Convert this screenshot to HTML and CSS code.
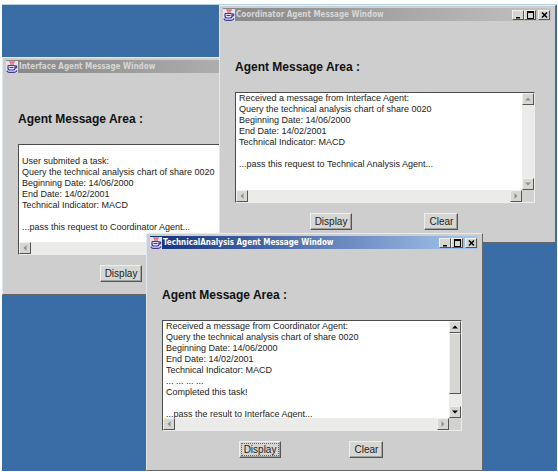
FILE: index.html
```html
<!DOCTYPE html>
<html lang="en">
<head>
<meta charset="utf-8">
<title>Agent Message Windows</title>
<link rel="stylesheet" href="styles.css">
</head>
<body>
<svg width="0" height="0" class="defs" aria-hidden="true">
  <symbol id="java" viewBox="0 0 12 12">
    <rect width="12" height="12" fill="#e4e2ee"/>
    <path d="M4 0v1l1 1v2M6 0v1l1 1v2M8 0v2" fill="none" stroke="#e0606c" stroke-width="1.2"/>
    <path d="M2 4.5h6.5M2 4.5v2.5q0 2 2 2h3q2 0 2-2V4.5M9 5q2-.5 1.800 1T8.500 7.500M3.500 6.500h4M1 9.500q0 1.800 2.500 1.800h4q3 0 3.500-2" fill="none" stroke="#3d3796" stroke-width="1.200"/>
  </symbol>
  <symbol id="min" viewBox="0 0 9 8"><path d="M2 6h4v1.500H2z"/></symbol>
  <symbol id="max" viewBox="0 0 9 8"><path d="M1 0h7v8H1zM2 2v5h5V2z" fill-rule="evenodd"/></symbol>
  <symbol id="close" viewBox="0 0 9 8"><path d="M2 1.500l5 5M7 1.500l-5 5" stroke="#000" stroke-width="1.500"/></symbol>
  <symbol id="up" viewBox="0 0 8 8"><path d="M4 2.500l3 3H1z"/></symbol>
  <symbol id="down" viewBox="0 0 8 8"><path d="M4 5.500l3-3H1z"/></symbol>
  <symbol id="left" viewBox="0 0 8 8"><path d="M2.500 4l3-3v6z"/></symbol>
  <symbol id="right" viewBox="0 0 8 8"><path d="M5.500 4l-3-3v6z"/></symbol>
</svg>
<main class="desktop">
  <section class="window interface">
    <header class="titlebar">
      <svg class="logo"><use href="#java"/></svg>
      <h1 class="title">Interface Agent Message Window</h1>
    </header>
    <div class="content">
      <label class="heading" for="msg1">Agent Message Area :</label>
      <div class="textbox">
        <textarea id="msg1" class="message" readonly>

User submited a task:
Query the technical analysis chart of share 0020
Beginning Date: 14/06/2000
End Date: 14/02/2001
Technical Indicator: MACD

...pass this request to Coordinator Agent...</textarea>
        <div class="vbar"></div>
        <div class="hbar off"><button class="arrow" aria-label="Scroll left"><svg><use href="#left"/></svg></button></div>
      </div>
      <div class="actions"><button class="push">Display</button><button class="push">Clear</button></div>
    </div>
  </section>

  <section class="window coordinator">
    <header class="titlebar">
      <svg class="logo"><use href="#java"/></svg>
      <h1 class="title">Coordinator Agent Message Window</h1>
      <div class="controls">
        <button class="ctl" aria-label="Minimize"><svg><use href="#min"/></svg></button>
        <button class="ctl" aria-label="Maximize"><svg><use href="#max"/></svg></button>
        <button class="ctl close" aria-label="Close"><svg><use href="#close"/></svg></button>
      </div>
    </header>
    <div class="content">
      <label class="heading" for="msg2">Agent Message Area :</label>
      <div class="textbox">
        <textarea id="msg2" class="message" readonly>Received a message from Interface Agent:
Query the technical analysis chart of share 0020
Beginning Date: 14/06/2000
End Date: 14/02/2001
Technical Indicator: MACD

...pass this request to Technical Analysis Agent...</textarea>
        <div class="vbar off">
          <button class="arrow" aria-label="Scroll up"><svg><use href="#up"/></svg></button>
          <button class="arrow" aria-label="Scroll down"><svg><use href="#down"/></svg></button>
        </div>
        <div class="hbar off">
          <button class="arrow" aria-label="Scroll left"><svg><use href="#left"/></svg></button>
          <button class="arrow" aria-label="Scroll right"><svg><use href="#right"/></svg></button>
        </div>
      </div>
      <div class="actions"><button class="push">Display</button><button class="push">Clear</button></div>
    </div>
  </section>

  <section class="window technical active">
    <header class="titlebar">
      <svg class="logo"><use href="#java"/></svg>
      <h1 class="title">TechnicalAnalysis Agent Message Window</h1>
      <div class="controls">
        <button class="ctl" aria-label="Minimize"><svg><use href="#min"/></svg></button>
        <button class="ctl" aria-label="Maximize"><svg><use href="#max"/></svg></button>
        <button class="ctl close" aria-label="Close"><svg><use href="#close"/></svg></button>
      </div>
    </header>
    <div class="content">
      <label class="heading" for="msg3">Agent Message Area :</label>
      <div class="textbox">
        <textarea id="msg3" class="message" readonly>Received a message from Coordinator Agent:
Query the technical analysis chart of share 0020
Beginning Date: 14/06/2000
End Date: 14/02/2001
Technical Indicator: MACD
... ... ... ...
Completed this task!

...pass the result to Interface Agent...</textarea>
        <div class="vbar">
          <button class="arrow" aria-label="Scroll up"><svg><use href="#up"/></svg></button>
          <div class="track"><div class="thumb"></div></div>
          <button class="arrow" aria-label="Scroll down"><svg><use href="#down"/></svg></button>
        </div>
        <div class="hbar off">
          <button class="arrow" aria-label="Scroll left"><svg><use href="#left"/></svg></button>
          <button class="arrow" aria-label="Scroll right"><svg><use href="#right"/></svg></button>
        </div>
      </div>
      <div class="actions"><button class="push focused">Display</button><button class="push">Clear</button></div>
    </div>
  </section>
</main>
</body>
</html>
```
FILE: styles.css
```css
* { box-sizing: border-box; }
body {
  margin: 0;
  padding: 4px 1px 1px 2px;
  min-height: 100vh;
  display: flex;
  background: #fff;
  font-family: "Liberation Sans", Arial, sans-serif;
}
.defs { position: absolute; }
.desktop {
  position: relative;
  flex: 1;
  background: #3a6ca6;
  border-top: 1px solid #b4d4e4;
}
.window {
  position: absolute;
  width: 337px;
  padding: 2px 4px 12px 3px;
  background: #cecece;
  border: 1px solid;
  border-color: #e4ecec #666 #666 #dde8ec;
}
.interface { left: 0; top: 52px; }
.coordinator { left: 217px; top: 0; }
.technical { left: 144px; top: 228px; }

.titlebar {
  display: flex;
  align-items: center;
  height: 13px;
  padding-right: 1px;
  background: linear-gradient(90deg, #868686, #c4c2c2);
  color: #d6d6d6;
}
.active .titlebar {
  background: linear-gradient(90deg, #14307c, #a6c8ee);
  color: #fff;
}
.logo { width: 12px; height: 12px; flex: none; }
.title {
  flex: 1;
  margin: 0;
  padding-left: 1px;
  font: bold 8px/12px "DejaVu Sans Condensed", "DejaVu Sans", sans-serif;
  white-space: nowrap;
}
.controls { display: flex; }
button {
  padding: 0;
  border: 1px solid;
  border-color: #f2f2ee #555 #555 #f2f2ee;
  border-radius: 0;
  background: #d6d6d2;
  color: #222;
}
.ctl { width: 12px; height: 10px; display: flex; align-items: center; justify-content: center; }
.ctl svg { width: 9px; height: 8px; }
.ctl.close { margin-left: 2px; }

.content { padding: 38px 16px 0 12px; }
.heading {
  display: block;
  margin-bottom: 17px;
  font-size: 12px;
  line-height: 16px;
  font-weight: bold;
  color: #111;
}
.textbox {
  display: grid;
  grid-template: 1fr 12px / 1fr 12px;
  height: 111px;
  border: 1px solid;
  border-color: #4c4c4c #eee #eee #4c4c4c;
  background: #d2d2d0;
}
.message {
  display: block;
  width: 100%;
  height: 100%;
  margin: 0;
  padding: 0 3px;
  border: 0;
  outline: 0;
  resize: none;
  overflow: hidden;
  white-space: pre;
  background: #fff;
  color: #222;
  font: 9px/11px "Liberation Sans", Arial, sans-serif;
}
.vbar, .hbar { display: flex; justify-content: space-between; background: #ebebe9; }
.vbar { flex-direction: column; }
.arrow { width: 12px; height: 12px; display: flex; align-items: center; justify-content: center; }
.arrow svg { width: 8px; height: 8px; fill: #000; }
.off .arrow svg { fill: #909090; }
.track { flex: 1; }
.thumb {
  height: 84%;
  background: #d6d6d2;
  border: 1px solid;
  border-color: #f2f2ee #555 #555 #f2f2ee;
}
.actions {
  display: flex;
  justify-content: center;
  gap: 72px;
  margin-top: 10px;
  padding-right: 2px;
}
.technical .actions { gap: 68px; }
.interface .actions { gap: 58px; }
.push {
  height: 17px;
  padding: 0 4px;
  border-color: #efefeb #555 #555 #efefeb;
  box-shadow: inset -1px -1px #a0a0a0;
  font: 10px/14px "Liberation Sans", Arial, sans-serif;
}
.focused { outline: 1px dotted #666; outline-offset: -3px; }
```
